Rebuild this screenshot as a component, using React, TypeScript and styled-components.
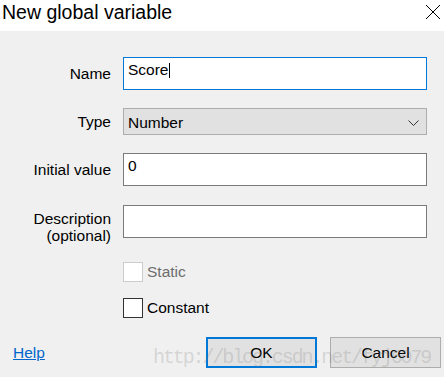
import styled, { createGlobalStyle } from "styled-components";

const GlobalStyle = createGlobalStyle`
  body {
    margin: 0;
    font-family: "Liberation Sans", Arial, sans-serif;
  }
`;

const Window = styled.div`
  position: relative;
  width: 444px;
  height: 377px;
  background: #f0f0f0;
  display: flex;
  flex-direction: column;
  overflow: hidden;
`;

const TitleBar = styled.div`
  height: 31px;
  background: #ffffff;
  display: flex;
  justify-content: space-between;
  align-items: flex-start;
  padding-left: 2px;
  padding-right: 3px;
`;

const Title = styled.div`
  font-size: 19.5px;
  line-height: 24px;
  color: #000;
`;

const CloseButton = styled.div`
  margin-top: 4px;
  width: 16px;
  height: 16px;
`;

const Form = styled.div`
  display: flex;
  flex-direction: column;
  padding-top: 26px;
`;

const Row = styled.div<{ $top?: number; $alignTop?: boolean }>`
  display: grid;
  grid-template-columns: 111px 304px;
  column-gap: 12px;
  align-items: ${(p) => (p.$alignTop ? "start" : "center")};
  margin-top: ${(p) => p.$top ?? 0}px;
  ${(p) => (p.$alignTop ? "height: 33px;" : "")}
`;

const Label = styled.div<{ $offset?: number }>`
  text-align: right;
  font-size: 15.5px;
  line-height: 17px;
  color: #000;
  margin-top: ${(p) => p.$offset ?? 0}px;
`;

const TextBox = styled.div<{ $focused?: boolean }>`
  box-sizing: border-box;
  height: 33px;
  background: #ffffff;
  border: 1px solid ${(p) => (p.$focused ? "#0078d7" : "#7a7a7a")};
  padding: 3px 4px 0;
  font-size: 15.5px;
  line-height: 18px;
  color: #000;
`;

const Caret = styled.span`
  display: inline-block;
  width: 1px;
  height: 15px;
  background: #000;
  vertical-align: -3px;
`;

const Select = styled.div`
  box-sizing: border-box;
  height: 27px;
  background: #e1e1e1;
  border: 1px solid #adadad;
  padding: 2px 7px 0 4px;
  display: flex;
  align-items: center;
  justify-content: space-between;
  font-size: 15.5px;
  color: #000;
`;

const CheckRow = styled.div<{ $top: number; $disabled?: boolean }>`
  display: flex;
  align-items: center;
  gap: 4px;
  margin-top: ${(p) => p.$top}px;
  padding-left: 123px;
  font-size: 15.5px;
  color: ${(p) => (p.$disabled ? "#6d6d6d" : "#000")};
`;

const Box = styled.span<{ $disabled?: boolean }>`
  box-sizing: border-box;
  width: 20px;
  height: 20px;
  background: #ffffff;
  border: 1px solid ${(p) => (p.$disabled ? "#cccccc" : "#333333")};
`;

const Footer = styled.div`
  display: flex;
  align-items: center;
  margin-top: 19px;
  padding: 0 3px 0 13px;
`;

const HelpLink = styled.a`
  font-size: 15.5px;
  color: #0066cc;
  text-decoration: underline;
  cursor: pointer;
`;

const Buttons = styled.div`
  display: flex;
  gap: 13px;
  margin-left: auto;
`;

const Button = styled.button<{ $primary?: boolean }>`
  box-sizing: border-box;
  width: 111px;
  height: 31px;
  background: #e1e1e1;
  border: ${(p) => (p.$primary ? "2px solid #0078d7" : "1px solid #adadad")};
  font-family: "Liberation Sans", Arial, sans-serif;
  font-size: 15.5px;
  color: #000;
  padding: 0;
`;

const Watermark = styled.div`
  position: absolute;
  left: 153px;
  top: 348px;
  font-family: "Liberation Mono", "DejaVu Sans Mono", monospace;
  font-size: 20px;
  line-height: 20px;
  letter-spacing: -2.1px;
  color: rgba(120, 120, 120, 0.24);
  pointer-events: none;
  white-space: nowrap;
`;

const App = () => {
  return (
    <Window>
      <GlobalStyle />
      <TitleBar>
        <Title>New global variable</Title>
        <CloseButton>
          <svg width="16" height="16" viewBox="0 0 16 16">
            <path d="M1 1 L15 15 M15 1 L1 15" stroke="#000" strokeWidth="1" />
          </svg>
        </CloseButton>
      </TitleBar>

      <Form>
        <Row>
          <Label>Name</Label>
          <TextBox $focused>
            Score
            <Caret />
          </TextBox>
        </Row>
        <Row $top={18}>
          <Label>Type</Label>
          <Select>
            <span>Number</span>
            <svg width="11" height="6" viewBox="0 0 11 6">
              <polyline points="0.5,0.5 5.5,5.5 10.5,0.5" fill="none" stroke="#333" strokeWidth="1" />
            </svg>
          </Select>
        </Row>
        <Row $top={18}>
          <Label>Initial value</Label>
          <TextBox>0</TextBox>
        </Row>
        <Row $top={19} $alignTop>
          <Label $offset={5}>
            Description
            <br />
            (optional)
          </Label>
          <TextBox />
        </Row>

        <CheckRow $top={24} $disabled>
          <Box $disabled />
          Static
        </CheckRow>
        <CheckRow $top={16}>
          <Box />
          Constant
        </CheckRow>
      </Form>

      <Footer>
        <HelpLink>Help</HelpLink>
        <Buttons>
          <Button $primary>OK</Button>
          <Button>Cancel</Button>
        </Buttons>
      </Footer>

      <Watermark>http://blog.csdn.net/fyj6079</Watermark>
    </Window>
  );
};

export default App;
